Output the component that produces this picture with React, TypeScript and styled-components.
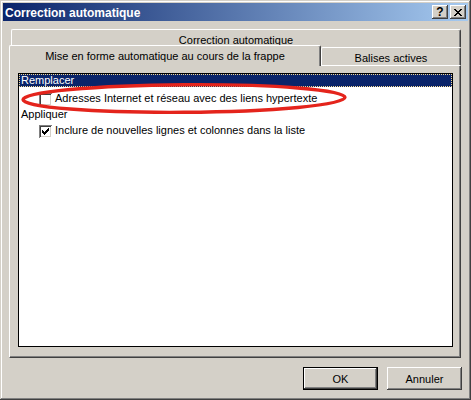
import styled, { createGlobalStyle } from "styled-components";

const GlobalStyle = createGlobalStyle`
  html, body {
    margin: 0;
    padding: 0;
    background: #d4d0c8;
  }
  body {
    font-family: "Liberation Sans", Arial, sans-serif;
    font-size: 11px;
    color: #000;
  }
`;

const Window = styled.div`
  width: 471px;
  height: 400px;
  box-sizing: border-box;
  padding: 3px;
  background: #d4d0c8;
  box-shadow: inset -1px -1px #404040, inset 1px 1px #d4d0c8,
    inset -2px -2px #808080, inset 2px 2px #fff;
  display: flex;
  flex-direction: column;
`;

const TitleBar = styled.div`
  height: 18px;
  flex: none;
  display: flex;
  align-items: center;
  padding: 0 2px;
  background: linear-gradient(to right, #0a246a, #a6caf0);
  color: #fff;
`;

const TitleText = styled.div`
  flex: 1;
  font-weight: bold;
  font-size: 12px;
  padding-top: 1px;
`;

const CaptionButtons = styled.div`
  display: flex;
  gap: 2px;
`;

const CaptionButton = styled.div`
  width: 16px;
  height: 14px;
  box-sizing: border-box;
  background: #d4d0c8;
  box-shadow: inset -1px -1px #404040, inset 1px 1px #fff,
    inset -2px -2px #808080;
  display: flex;
  align-items: center;
  justify-content: center;
  color: #000;
  font-weight: bold;
  font-size: 12px;
  line-height: 14px;
`;

const Client = styled.div`
  flex: 1;
  display: flex;
  flex-direction: column;
  padding: 8px 7px 7px 6px;
  min-height: 0;
`;

const TabRow = styled.div<{ $front?: boolean }>`
  height: 18px;
  flex: none;
  display: flex;
  align-items: flex-end;
  padding-left: ${(p) => (p.$front ? 0 : 2)}px;
  position: relative;
  z-index: ${(p) => (p.$front ? 2 : 1)};
`;

const Tab = styled.div<{ $selected?: boolean; $width?: number }>`
  box-sizing: border-box;
  ${(p) => (p.$width ? `width: ${p.$width}px;` : "flex: 1;")}
  height: ${(p) => (p.$selected ? 21 : 18)}px;
  margin-bottom: ${(p) => (p.$selected ? -1 : 0)}px;
  background: #d4d0c8;
  border-left: 1px solid #fff;
  border-top: 1px solid #fff;
  border-right: 1px solid #404040;
  border-radius: 2px 2px 0 0;
  box-shadow: inset -1px 0 #808080;
  display: flex;
  justify-content: center;
  align-items: center;
  padding-top: ${(p) => (p.$selected ? 0 : 2)}px;
  white-space: nowrap;
`;

const Panel = styled.div`
  flex: 1;
  min-height: 0;
  display: flex;
  flex-direction: column;
  border-left: 1px solid #fff;
  border-top: 1px solid #fff;
  border-right: 1px solid #404040;
  border-bottom: 1px solid #404040;
  box-shadow: inset -1px -1px #808080;
  padding: 7px 7px 10px 8px;
`;

const ListBox = styled.div`
  flex: 1;
  position: relative;
  background: #fff;
  border: 1px solid #000;
  overflow: hidden;
`;

const Row = styled.div<{ $indent?: number }>`
  height: 16px;
  display: flex;
  align-items: center;
  padding-left: ${(p) => p.$indent ?? 2}px;
  white-space: nowrap;
`;

const SelectedLabel = styled.div`
  flex: 1;
  align-self: flex-start;
  height: 13px;
  line-height: 13px;
  margin-left: -2px;
  padding-left: 2px;
  background: #0a246a;
  color: #fff;
  outline: 1px dotted #f5db95;
  outline-offset: -1px;
`;

const Check = styled.div`
  width: 13px;
  height: 13px;
  box-sizing: border-box;
  align-self: flex-end;
  background: #fff;
  box-shadow: inset 1px 1px #808080, inset -1px -1px #fff,
    inset 2px 2px #404040, inset -2px -2px #d4d0c8;
  flex: none;
  margin-right: 3px;
  svg {
    display: block;
  }
`;

const Ellipse = styled.svg`
  position: absolute;
  left: 0;
  top: 0;
  width: 434px;
  height: 60px;
  overflow: visible;
  pointer-events: none;
`;

const ButtonRow = styled.div`
  flex: none;
  display: flex;
  justify-content: flex-end;
  gap: 9px;
  margin-top: 9px;
  margin-right: -1px;
`;

const Button = styled.div<{ $default?: boolean }>`
  width: 75px;
  height: 23px;
  box-sizing: border-box;
  background: #d4d0c8;
  display: flex;
  align-items: center;
  justify-content: center;
  border: ${(p) => (p.$default ? "1px solid #000" : "none")};
  box-shadow: inset -1px -1px #404040, inset 1px 1px #fff,
    inset -2px -2px #808080;
`;

const checkCols = [
  [2, 4],
  [3, 5],
  [4, 6],
  [3, 5],
  [2, 4],
  [1, 3],
  [0, 2],
];

const CheckBox = ({ checked }: { checked?: boolean }) => (
  <Check>
    {checked && (
      <svg width="13" height="13" shapeRendering="crispEdges">
        {checkCols.map(([a, b], i) => (
          <rect key={i} x={3 + i} y={3 + a} width="1" height={b - a + 1} fill="#000" />
        ))}
      </svg>
    )}
  </Check>
);

const CloseGlyph = () => (
  <svg width="8" height="7" viewBox="0 0 8 7" shapeRendering="crispEdges">
    {[0, 1, 2, 3, 4, 5, 6].map((i) => (
      <g key={i}>
        <rect x={i} y={i} width="2" height="1" fill="#000" />
        <rect x={6 - i} y={i} width="2" height="1" fill="#000" />
      </g>
    ))}
  </svg>
);

const App = () => {
  return (
    <>
      <GlobalStyle />
      <Window>
        <TitleBar>
          <TitleText>Correction automatique</TitleText>
          <CaptionButtons>
            <CaptionButton>?</CaptionButton>
            <CaptionButton>
              <CloseGlyph />
            </CaptionButton>
          </CaptionButtons>
        </TitleBar>
        <Client>
          <TabRow>
            <Tab>Correction automatique</Tab>
          </TabRow>
          <TabRow $front>
            <Tab $selected $width={312}>
              Mise en forme automatique au cours de la frappe
            </Tab>
            <Tab>Balises actives</Tab>
          </TabRow>
          <Panel>
            <ListBox>
              <Row>
                <SelectedLabel>Remplacer</SelectedLabel>
              </Row>
              <Row $indent={20}>
                <CheckBox />
                Adresses Internet et réseau avec des liens hypertexte
              </Row>
              <Row>Appliquer</Row>
              <Row $indent={20}>
                <CheckBox checked />
                Inclure de nouvelles lignes et colonnes dans la liste
              </Row>
              <Ellipse>
                <ellipse
                  cx="165"
                  cy="24.5"
                  rx="161"
                  ry="13.8"
                  fill="none"
                  stroke="#e4241c"
                  strokeWidth="3.4"
                  transform="rotate(-0.4 165 24.5)"
                />
              </Ellipse>
            </ListBox>
          </Panel>
          <ButtonRow>
            <Button $default>OK</Button>
            <Button>Annuler</Button>
          </ButtonRow>
        </Client>
      </Window>
    </>
  );
};

export default App;
